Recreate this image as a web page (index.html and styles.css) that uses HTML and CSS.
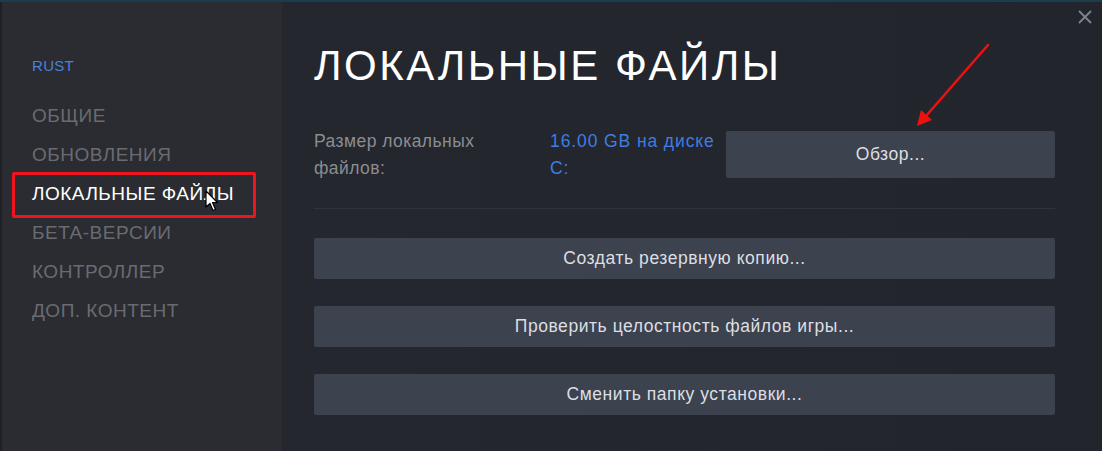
FILE: index.html
```html
<!DOCTYPE html>
<html lang="ru">
<head>
    <meta charset="UTF-8">
    <meta name="viewport" content="width=device-width, initial-scale=1.0">
    <title>Свойства — Rust</title>
    <link rel="stylesheet" href="styles.css">
</head>
<body>

    <div class="window">
        <aside class="sidebar">
            <div class="game-name">RUST</div>
            <nav class="menu">
                <a class="menu-item">ОБЩИЕ</a>
                <a class="menu-item">ОБНОВЛЕНИЯ</a>
                <a class="menu-item active">
                    ЛОКАЛЬНЫЕ ФАЙЛЫ
                    <span class="mark-box"></span>
                    <svg class="cursor" width="14" height="22" viewBox="0 0 14 22">
                        <path d="M1 1 L1 17 L5 13.5 L8 20.5 L10.5 19.5 L7.5 12.5 L12.5 12.5 Z" fill="#fff" stroke="#000" stroke-width="1.2" stroke-linejoin="round"/>
                    </svg>
                </a>
                <a class="menu-item">БЕТА-ВЕРСИИ</a>
                <a class="menu-item">КОНТРОЛЛЕР</a>
                <a class="menu-item">ДОП. КОНТЕНТ</a>
            </nav>
        </aside>

        <main class="content">
            <h1 class="title">ЛОКАЛЬНЫЕ ФАЙЛЫ</h1>

            <div class="size-row">
                <div class="size-label">Размер локальных файлов:</div>
                <div class="size-value">16.00 GB на диске C:</div>
                <button class="btn btn-browse">Обзор...</button>
            </div>

            <div class="divider"></div>

            <div class="actions">
                <button class="btn">Создать резервную копию...</button>
                <button class="btn">Проверить целостность файлов игры...</button>
                <button class="btn">Сменить папку установки...</button>
            </div>

            <!-- стрелка к кнопке "Обзор" -->
            <svg class="pointer-arrow" width="90" height="100" viewBox="0 0 90 100">
                <line x1="80" y1="5" x2="18" y2="76" stroke="#f01010" stroke-width="2.5" stroke-linecap="round"/>
                <path d="M9 86 L13 70 L24 80 Z" fill="#f01010"/>
            </svg>
        </main>

        <button class="close" aria-label="Закрыть">
            <svg width="14" height="14" viewBox="0 0 14 14">
                <path d="M1 1 L13 13 M13 1 L1 13" stroke="#7f858d" stroke-width="1.8"/>
            </svg>
        </button>
    </div>

</body>
</html>
```

FILE: styles.css
```css
body {
    margin: 0;
    padding: 0;
    background-color: #23262d;
    font-family: "Liberation Sans", Arial, sans-serif;
}

.window {
    position: relative;
    display: flex;
    width: 1102px;
    height: 451px;
    box-sizing: border-box;
    border-top: 2px solid #1b3e4f;
    background-color: #23262d;
    overflow: hidden;
}

/* левая колонка */
.sidebar {
    width: 282px;
    flex-shrink: 0;
    box-sizing: border-box;
    padding: 54px 0 0 30px;
    background-color: #2a2c31;
    border-left: 2px solid #1f2125;
}

.game-name {
    color: #4a80d8;
    font-size: 15px;
    letter-spacing: 0.3px;
    line-height: 20px;
    margin-bottom: 20px;
}

.menu {
    display: flex;
    flex-direction: column;
}

.menu-item {
    position: relative;
    display: block;
    color: #696b70;
    font-size: 19px;
    letter-spacing: 0.5px;
    line-height: 39px;
    white-space: nowrap;
}

.menu-item.active {
    color: #ffffff;
}

.mark-box {
    position: absolute;
    left: -20px;
    top: -2px;
    width: 244px;
    height: 46px;
    box-sizing: border-box;
    border: 3px solid #f0141e;
    border-radius: 2px;
}

.cursor {
    position: absolute;
    left: 173px;
    top: 16px;
}

/* правая часть */
.content {
    position: relative;
    flex: 1;
    padding: 39px 47px 0 32px;
    background: linear-gradient(90deg, #24272e 0%, #22252c 100%);
}

.title {
    margin: 0 0 40px 0;
    color: #ffffff;
    font-size: 42px;
    font-weight: normal;
    line-height: 50px;
    letter-spacing: 2.5px;
}

.size-row {
    display: flex;
    align-items: flex-start;
    height: 52px;
}

.size-label {
    width: 200px;
    margin-right: 36px;
    color: #8b8d92;
    font-size: 17.5px;
    letter-spacing: 0.45px;
    line-height: 27px;
    margin-top: -3px;
}

.size-value {
    width: 166px;
    margin-right: 10px;
    color: #3f7ce3;
    font-size: 17.5px;
    letter-spacing: 0.9px;
    line-height: 27px;
    margin-top: -3px;
}

.divider {
    height: 1px;
    margin: 25px 0 29px 0;
    background-color: #30333a;
}

.actions {
    display: flex;
    flex-direction: column;
    gap: 27px;
}

.btn {
    display: block;
    width: 100%;
    height: 41px;
    padding: 0;
    border: none;
    border-radius: 2px;
    background-color: #3c424e;
    color: #dcdfe3;
    font-family: "Liberation Sans", Arial, sans-serif;
    font-size: 17.5px;
    letter-spacing: 0.55px;
    cursor: pointer;
}

.btn-browse {
    flex: 1;
    height: 47px;
}

.pointer-arrow {
    position: absolute;
    left: 626px;
    top: 38px;
}

.close {
    position: absolute;
    top: 8px;
    right: 10px;
    padding: 0;
    border: none;
    background: none;
    line-height: 0;
}
```
